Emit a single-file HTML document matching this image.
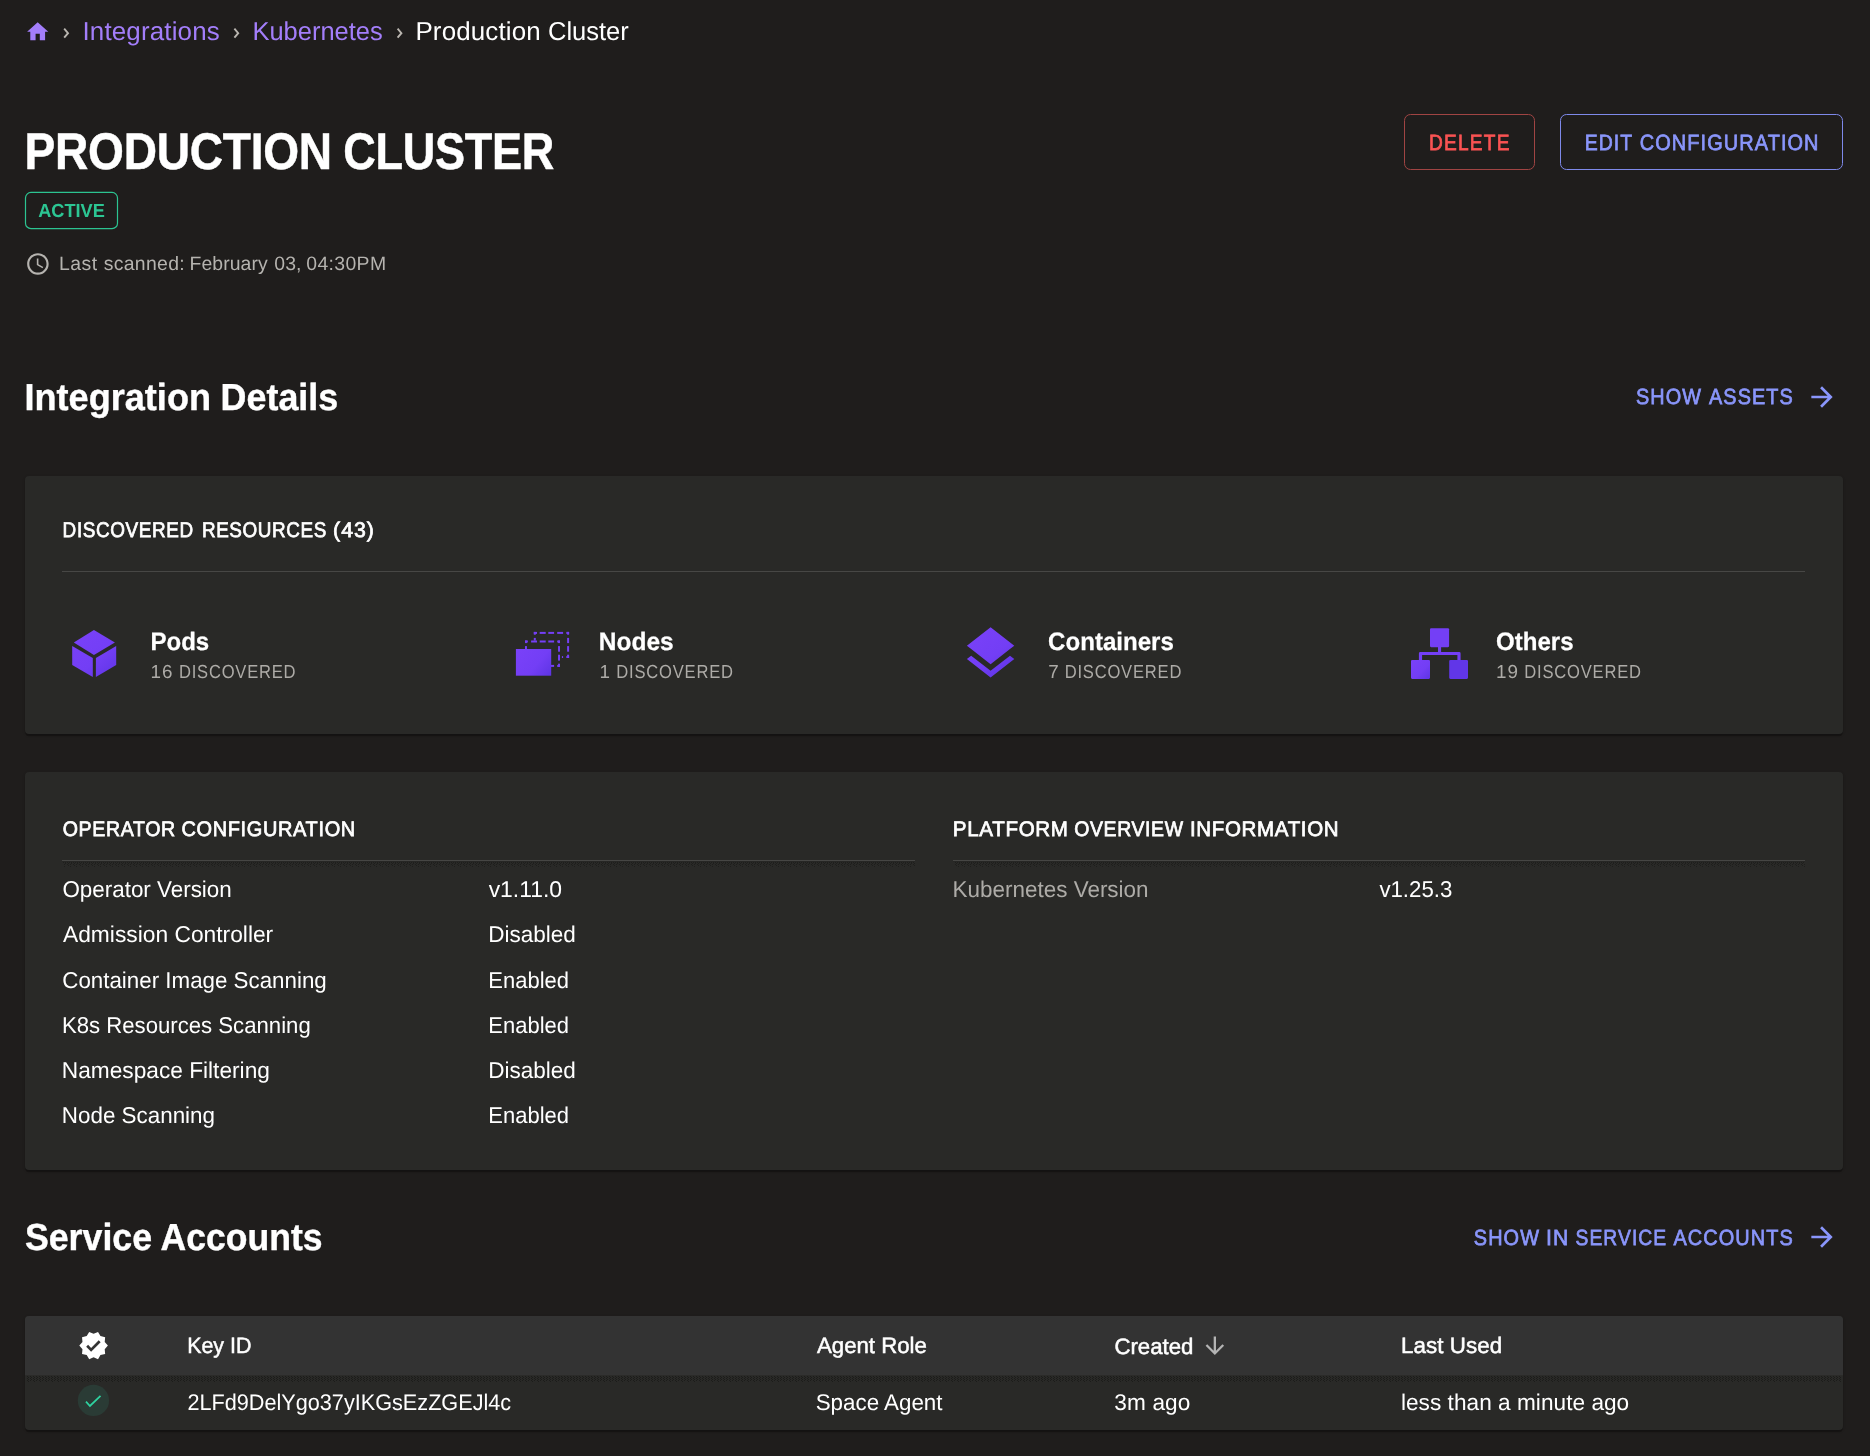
<!DOCTYPE html>
<html><head><meta charset="utf-8"><title>Production Cluster</title>
<style>
html,body{margin:0;padding:0;background:#1f1d1c;}
body{width:1870px;height:1456px;position:relative;overflow:hidden;font-family:"Liberation Sans",sans-serif;}
.a{position:absolute;box-sizing:content-box;}
.card{background:#292927;border-radius:4px;box-shadow:0 2.6px 0.5px -0.4px rgba(0,0,0,.25),0 1px 3px 0 rgba(0,0,0,.22);}
.t{position:absolute;white-space:nowrap;line-height:1;transform-origin:0 50%;font-weight:400;text-rendering:geometricPrecision;}
svg{display:block;overflow:visible}
</style></head><body>
<svg class="a" style="left:24.85px;top:18.65px" width="25.4" height="25.4" viewBox="0 0 24 24" fill="#a37efa"><path d="M10 20v-6h4v6h5v-8h3L12 3 2 12h3v8z"/></svg>
<svg class="a" style="left:0;top:0" width="700" height="60"><polyline points="64.2,28.700000000000003 68.0,33.150000000000006 64.2,37.6" fill="none" stroke="#bab6b0" stroke-width="1.9"/></svg>
<svg class="a" style="left:0;top:0" width="700" height="60"><polyline points="234.4,28.700000000000003 238.2,33.150000000000006 234.4,37.6" fill="none" stroke="#bab6b0" stroke-width="1.9"/></svg>
<svg class="a" style="left:0;top:0" width="700" height="60"><polyline points="397.6,28.700000000000003 401.40000000000003,33.150000000000006 397.6,37.6" fill="none" stroke="#bab6b0" stroke-width="1.9"/></svg>
<svg class="a" style="left:20px;top:188px" width="104" height="46" viewBox="20 188 104 46"><rect x="25.5" y="192.45" width="92" height="36.2" rx="5.5" fill="none" stroke="#2cc491" stroke-width="1.2"/></svg>
<svg class="a" style="left:24.8px;top:251.2px" width="25.8" height="25.8" viewBox="0 0 24 24" fill="#b5b3af"><path d="M11.99 2C6.47 2 2 6.48 2 12s4.47 10 9.99 10C17.52 22 22 17.52 22 12S17.52 2 11.99 2zM12 20c-4.42 0-8-3.58-8-8s3.58-8 8-8 8 3.58 8 8-3.58 8-8 8zm.5-13H11v6l5.25 3.15.75-1.23-4.5-2.67z"/></svg>
<div class="a" style="left:1404px;top:114px;width:129px;height:54px;border:1px solid #a04443;border-radius:6.5px"></div>
<div class="a" style="left:1560px;top:114px;width:281px;height:54px;border:1px solid #7e89ea;border-radius:6.5px"></div>
<svg class="a" style="left:1805.5px;top:381.3px" width="32" height="32" viewBox="0 0 24 24" fill="#8a96fb"><path d="M12 4l-1.41 1.41L16.17 11H4v2h12.17l-5.58 5.59L12 20l8-8z"/></svg>
<svg class="a" style="left:1805.7px;top:1221.2px" width="32" height="32" viewBox="0 0 24 24" fill="#8a96fb"><path d="M12 4l-1.41 1.41L16.17 11H4v2h12.17l-5.58 5.59L12 20l8-8z"/></svg>
<div class="a card" style="left:25px;top:476px;width:1818px;height:258px"></div>
<div class="a card" style="left:25px;top:772px;width:1818px;height:398px"></div>
<div class="a" style="left:62px;top:571px;width:1743px;height:1px;background:#474745"></div>
<div class="a" style="left:62px;top:860px;width:853px;height:1px;background:#464644"></div>
<div class="a" style="left:953px;top:860px;width:852px;height:1px;background:#464644"></div>
<svg class="a" style="left:0;top:861px" width="1870" height="6" viewBox="0 861 1870 6" shape-rendering="crispEdges"><defs><pattern id="h1" patternUnits="userSpaceOnUse" x="0" y="862" width="2" height="1"><rect x="1" y="0" width="1" height="1" fill="#1e1e1c"/></pattern><pattern id="h2" patternUnits="userSpaceOnUse" x="0" y="863" width="3" height="1"><rect x="2" y="0" width="1" height="1" fill="#1e1e1c"/></pattern><pattern id="h3" patternUnits="userSpaceOnUse" x="0" y="864" width="3" height="1"><rect x="1" y="0" width="1" height="1" fill="#1e1e1c"/></pattern><pattern id="h4" patternUnits="userSpaceOnUse" x="0" y="865" width="6" height="1"><rect x="2" y="0" width="1" height="1" fill="#1e1e1c"/></pattern><pattern id="h5" patternUnits="userSpaceOnUse" x="0" y="866" width="6" height="1"><rect x="4" y="0" width="1" height="1" fill="#1e1e1c"/></pattern></defs><rect x="62" y="861" width="853" height="1" fill="#262624"/><rect x="63" y="862" width="852" height="1" fill="url(#h1)"/><rect x="63" y="863" width="852" height="1" fill="url(#h2)"/><rect x="63" y="864" width="852" height="1" fill="url(#h3)"/><rect x="63" y="865" width="852" height="1" fill="url(#h4)"/><rect x="63" y="866" width="852" height="1" fill="url(#h5)"/><rect x="953" y="861" width="852" height="1" fill="#262624"/><rect x="954" y="862" width="851" height="1" fill="url(#h1)"/><rect x="954" y="863" width="851" height="1" fill="url(#h2)"/><rect x="954" y="864" width="851" height="1" fill="url(#h3)"/><rect x="954" y="865" width="851" height="1" fill="url(#h4)"/><rect x="954" y="866" width="851" height="1" fill="url(#h5)"/></svg>
<svg class="a" style="left:62px;top:620px" width="66" height="66" viewBox="62 620 66 66"><defs><linearGradient id="g1" gradientUnits="userSpaceOnUse" x1="76" y1="632" x2="116" y2="680"><stop offset="0" stop-color="#7941f8"/><stop offset="0.55" stop-color="#733ef5"/><stop offset="1" stop-color="#5d34e4"/></linearGradient></defs>
<g fill="url(#g1)">
<polygon points="93.96,629.9 114.9,642.4 93.96,655.1 73.8,642.4"/>
<polygon points="72.2,646.0 92.8,657.9 92.8,677.0 72.2,664.9"/>
<polygon points="95.9,657.9 116.2,646.0 116.2,664.9 95.9,677.0"/>
</g></svg>
<svg class="a" style="left:508px;top:620px" width="66" height="66" viewBox="508 620 66 66"><defs><linearGradient id="g2" gradientUnits="userSpaceOnUse" x1="520" y1="650" x2="551" y2="676"><stop offset="0" stop-color="#7941f8"/><stop offset="0.55" stop-color="#733ef5"/><stop offset="1" stop-color="#5d34e4"/></linearGradient></defs>
<rect x="533.8" y="631.9" width="3.20" height="2.00" fill="#743ff6"/><rect x="539.7" y="631.9" width="6.00" height="2.00" fill="#743ff6"/><rect x="548.3" y="631.9" width="5.80" height="2.00" fill="#743ff6"/><rect x="557.2" y="631.9" width="5.90" height="2.00" fill="#743ff6"/><rect x="566.3" y="631.9" width="2.80" height="2.00" fill="#743ff6"/><rect x="567.1" y="631.9" width="2.00" height="2.80" fill="#743ff6"/><rect x="567.1" y="637.9" width="2.00" height="5.20" fill="#743ff6"/><rect x="567.1" y="646.1" width="2.00" height="5.60" fill="#743ff6"/><rect x="567.1" y="654.7" width="2.00" height="3.30" fill="#743ff6"/><rect x="561.9" y="656.1" width="1.20" height="1.90" fill="#743ff6"/><rect x="566.3" y="656.1" width="2.80" height="1.90" fill="#743ff6"/><rect x="533.8" y="631.9" width="2.00" height="2.80" fill="#743ff6"/><rect x="533.8" y="637.9" width="2.00" height="2.70" fill="#743ff6"/><rect x="525.0" y="640.5" width="2.90" height="2.00" fill="#743ff6"/><rect x="531.1" y="640.5" width="5.90" height="2.00" fill="#743ff6"/><rect x="539.7" y="640.5" width="6.00" height="2.00" fill="#743ff6"/><rect x="548.3" y="640.5" width="5.80" height="2.00" fill="#743ff6"/><rect x="557.2" y="640.5" width="2.80" height="2.00" fill="#743ff6"/><rect x="558.05" y="640.5" width="1.95" height="2.60" fill="#743ff6"/><rect x="558.05" y="646.1" width="1.95" height="5.60" fill="#743ff6"/><rect x="558.05" y="654.7" width="1.95" height="5.90" fill="#743ff6"/><rect x="558.05" y="663.7" width="1.95" height="3.20" fill="#743ff6"/><rect x="551.0" y="664.9" width="3.10" height="2.00" fill="#743ff6"/><rect x="557.2" y="664.9" width="2.80" height="2.00" fill="#743ff6"/><rect x="525.0" y="640.5" width="1.95" height="2.60" fill="#743ff6"/><rect x="525.0" y="646.1" width="1.95" height="3.10" fill="#743ff6"/>
<rect x="515.9" y="649" width="35.3" height="26.7" fill="url(#g2)"/>
</svg>
<svg class="a" style="left:958.9px;top:621.9px" width="63.2" height="63.2" viewBox="0 0 24 24"><defs><linearGradient id="g3" gradientUnits="userSpaceOnUse" x1="5" y1="3" x2="19" y2="21"><stop offset="0" stop-color="#7941f8"/><stop offset="0.55" stop-color="#733ef5"/><stop offset="1" stop-color="#5d34e4"/></linearGradient></defs><path d="M11.99 18.54l-7.37-5.73L3 14.07l9 7 9-7-1.63-1.27-7.38 5.74zM12 16l7.36-5.73L21 9l-9-7-9 7 1.63 1.27L12 16z" fill="url(#g3)"/></svg>
<svg class="a" style="left:1406px;top:620px" width="66" height="66" viewBox="1406 620 66 66"><defs><linearGradient id="g4" gradientUnits="userSpaceOnUse" x1="1412" y1="661" x2="1430" y2="679"><stop offset="0" stop-color="#7941f8"/><stop offset="0.55" stop-color="#733ef5"/><stop offset="1" stop-color="#5d34e4"/></linearGradient></defs>
<g fill="#743ff6">
<rect x="1430" y="628.2" width="19.1" height="19" rx="1.15"/>
<rect x="1438" y="646" width="3.1" height="7"/>
<path d="M1418.9,660.5 V653.4 Q1418.9,652 1420.3,652 H1459.2 Q1460.6,652 1460.6,653.4 V660.5 H1457.4 V655.1 H1422.1 V660.5 Z"/>
</g>
<rect x="1411" y="659.9" width="19" height="19" rx="1.15" fill="url(#g4)"/>
<rect x="1449.2" y="659.9" width="18.8" height="19" rx="1.15" fill="#6136e8"/>
</svg>
<div class="a card" style="left:25px;top:1316px;width:1818px;height:114px;background:#292927;overflow:hidden">
<div style="height:59px;background:#333333"></div></div>
<svg class="a" style="left:25px;top:1375px" width="1818" height="8" viewBox="25 1375 1818 8" shape-rendering="crispEdges">
<defs><pattern id="d1" patternUnits="userSpaceOnUse" x="0" y="1376" width="3" height="2"><rect x="0" y="0" width="1" height="1" fill="#1c1c1a"/><rect x="1" y="1" width="1" height="1" fill="#1c1c1a"/></pattern>
<pattern id="d2" patternUnits="userSpaceOnUse" x="0" y="1381" width="6" height="1"><rect x="4" y="0" width="1" height="1" fill="#1c1c1a"/></pattern></defs>
<rect x="25" y="1375" width="1818" height="1" fill="#2b2b29"/>
<rect x="26" y="1376" width="1816" height="5" fill="url(#d1)"/>
<rect x="26" y="1381" width="1816" height="1" fill="url(#d2)"/>
</svg>
<svg class="a" style="left:77.85px;top:1330.35px" width="31.2" height="31.2" viewBox="0 0 24 24" fill="#ffffff"><path d="M23 12l-2.44-2.79.34-3.69-3.61-.82-1.89-3.2L12 2.96 8.6 1.5 6.71 4.69 3.1 5.5l.34 3.7L1 12l2.44 2.79-.34 3.7 3.61.82L8.6 22.5l3.4-1.47 3.4 1.46 1.89-3.19 3.61-.82-.34-3.69L23 12zm-12.91 4.72l-3.8-3.81 1.48-1.48 2.32 2.33 5.85-5.87 1.48 1.48-7.33 7.35z"/></svg>
<svg class="a" style="left:1200.5px;top:1332.1px" width="27.7" height="27.7" viewBox="0 0 24 24" fill="#b4b4b4"><path d="M20 12l-1.41-1.41L13 16.17V4h-2v12.17l-5.58-5.59L4 12l8 8 8-8z"/></svg>
<svg class="a" style="left:70px;top:1380px" width="48" height="42" viewBox="70 1380 48 42">
<circle cx="93.45" cy="1400.45" r="15.65" fill="#2a3b35"/>
<polyline points="86.0,1401.7 89.95,1406.0 100.5,1395.9" fill="none" stroke="#2ed3a0" stroke-width="1.75"/></svg>
<div id="tx" style="position:absolute;left:0;top:0;width:1870px;height:1456px;will-change:transform">
<span class="t" style="top:20px;font-size:25.94px;color:#a37efa;left:82px;letter-spacing:0.156px;transform:translateX(0.46px);">Integrations</span>
<span class="t" style="top:20px;font-size:25.94px;color:#a37efa;left:252px;transform:translateX(0.43px) scaleX(0.9826);">Kubernetes</span>
<span class="t" style="top:20px;font-size:25.94px;color:#ffffff;left:415px;letter-spacing:0.145px;transform:translateX(0.40px);">Production</span>
<span class="t" style="top:20px;font-size:25.94px;color:#ffffff;left:548px;transform:translateX(0.01px) scaleX(0.9834);">Cluster</span>
<span class="t" style="top:126px;font-size:51.45px;color:#ffffff;font-weight:700;-webkit-text-stroke:0.5px currentColor;letter-spacing:-0.3px;left:24px;transform:translateX(0.58px) scaleX(0.8965);">PRODUCTION</span>
<span class="t" style="top:126px;font-size:51.45px;color:#ffffff;font-weight:700;-webkit-text-stroke:0.5px currentColor;letter-spacing:-0.3px;left:343px;transform:translateX(0.19px) scaleX(0.8761);">CLUSTER</span>
<span class="t" style="top:202px;font-size:18.99px;color:#2cc693;font-weight:700;left:38px;transform:translateX(0.24px) scaleX(0.9569);">ACTIVE</span>
<span class="t" style="top:255px;font-size:19.42px;color:#b5b3af;left:59px;letter-spacing:0.423px;transform:translateX(0.07px);">Last</span>
<span class="t" style="top:255px;font-size:19.42px;color:#b5b3af;left:103px;letter-spacing:0.323px;transform:translateX(0.64px);">scanned:</span>
<span class="t" style="top:255px;font-size:19.42px;color:#b5b3af;left:189px;letter-spacing:0.084px;transform:translateX(0.47px);">February</span>
<span class="t" style="top:255px;font-size:19.42px;color:#b5b3af;left:274px;letter-spacing:0.075px;transform:translateX(0.26px);">03,</span>
<span class="t" style="top:255px;font-size:19.42px;color:#b5b3af;left:306px;letter-spacing:0.337px;transform:translateX(0.36px);">04:30PM</span>
<span class="t" style="top:132px;font-size:22.1px;color:#f95353;-webkit-text-stroke:0.75px currentColor;letter-spacing:1.4px;left:1428px;transform:translateX(0.98px) scaleX(0.8662);">DELETE</span>
<span class="t" style="top:132px;font-size:22.1px;color:#8a96fb;-webkit-text-stroke:0.75px currentColor;letter-spacing:1.2px;left:1584px;transform:translateX(0.66px) scaleX(0.8798);">EDIT</span>
<span class="t" style="top:132px;font-size:22.1px;color:#8a96fb;-webkit-text-stroke:0.75px currentColor;letter-spacing:1.2px;left:1639px;transform:translateX(0.75px) scaleX(0.9023);">CONFIGURATION</span>
<span class="t" style="top:379px;font-size:37.68px;color:#ffffff;font-weight:700;-webkit-text-stroke:0.4px currentColor;left:24px;transform:translateX(0.48px) scaleX(0.9583);">Integration</span>
<span class="t" style="top:379px;font-size:37.68px;color:#ffffff;font-weight:700;-webkit-text-stroke:0.4px currentColor;left:220px;transform:translateX(0.59px) scaleX(0.9521);">Details</span>
<span class="t" style="top:386px;font-size:21.96px;color:#8a96fb;-webkit-text-stroke:0.75px currentColor;letter-spacing:1.2px;left:1635px;transform:translateX(0.95px) scaleX(0.9036);">SHOW</span>
<span class="t" style="top:386px;font-size:21.96px;color:#8a96fb;-webkit-text-stroke:0.75px currentColor;letter-spacing:1.2px;left:1709px;transform:translateX(0.04px) scaleX(0.9036);">ASSETS</span>
<span class="t" style="top:520px;font-size:21.23px;color:#ffffff;-webkit-text-stroke:0.75px currentColor;letter-spacing:0.7px;left:62px;transform:translateX(0.62px) scaleX(0.8908);">DISCOVERED</span>
<span class="t" style="top:520px;font-size:21.23px;color:#ffffff;-webkit-text-stroke:0.75px currentColor;letter-spacing:0.7px;left:201px;transform:translateX(0.93px) scaleX(0.8886);">RESOURCES</span>
<span class="t" style="top:520px;font-size:21.23px;color:#ffffff;-webkit-text-stroke:0.75px currentColor;left:333px;letter-spacing:1.040px;transform:translateX(0.08px);">(43)</span>
<span class="t" style="top:630px;font-size:25.14px;color:#ffffff;font-weight:700;-webkit-text-stroke:0.25px currentColor;left:150px;transform:translateX(0.43px) scaleX(0.9566);">Pods</span>
<span class="t" style="top:663px;font-size:18.84px;color:#adaba7;left:150px;letter-spacing:0.918px;transform:translateX(0.62px);">16</span>
<span class="t" style="top:663px;font-size:18.84px;color:#adaba7;letter-spacing:0.9px;left:178px;transform:translateX(0.89px) scaleX(0.8800);">DISCOVERED</span>
<span class="t" style="top:630px;font-size:25.14px;color:#ffffff;font-weight:700;-webkit-text-stroke:0.25px currentColor;left:598px;transform:translateX(0.81px) scaleX(0.9740);">Nodes</span>
<span class="t" style="top:663px;font-size:18.84px;color:#adaba7;left:599px;letter-spacing:0.900px;transform:translateX(0.52px);">1</span>
<span class="t" style="top:663px;font-size:18.84px;color:#adaba7;letter-spacing:0.9px;left:616px;transform:translateX(0.29px) scaleX(0.8800);">DISCOVERED</span>
<span class="t" style="top:630px;font-size:25.14px;color:#ffffff;font-weight:700;-webkit-text-stroke:0.25px currentColor;left:1048px;transform:translateX(0.10px) scaleX(0.9578);">Containers</span>
<span class="t" style="top:663px;font-size:18.84px;color:#adaba7;left:1048px;letter-spacing:0.900px;transform:translateX(0.35px);">7</span>
<span class="t" style="top:663px;font-size:18.84px;color:#adaba7;letter-spacing:0.9px;left:1064px;transform:translateX(0.69px) scaleX(0.8800);">DISCOVERED</span>
<span class="t" style="top:630px;font-size:25.14px;color:#ffffff;font-weight:700;-webkit-text-stroke:0.25px currentColor;left:1496px;transform:translateX(0.10px) scaleX(0.9559);">Others</span>
<span class="t" style="top:663px;font-size:18.84px;color:#adaba7;left:1496px;letter-spacing:0.900px;transform:translateX(0.02px);">19</span>
<span class="t" style="top:663px;font-size:18.84px;color:#adaba7;letter-spacing:0.9px;left:1524px;transform:translateX(0.29px) scaleX(0.8800);">DISCOVERED</span>
<span class="t" style="top:819px;font-size:21.09px;color:#ffffff;-webkit-text-stroke:0.75px currentColor;letter-spacing:0.7px;left:62px;transform:translateX(0.73px) scaleX(0.9280);">OPERATOR</span>
<span class="t" style="top:819px;font-size:21.09px;color:#ffffff;-webkit-text-stroke:0.75px currentColor;letter-spacing:0.7px;left:181px;transform:translateX(0.44px) scaleX(0.9464);">CONFIGURATION</span>
<span class="t" style="top:819px;font-size:21.09px;color:#ffffff;-webkit-text-stroke:0.75px currentColor;letter-spacing:0.7px;left:952px;transform:translateX(0.82px) scaleX(0.9746);">PLATFORM</span>
<span class="t" style="top:819px;font-size:21.09px;color:#ffffff;-webkit-text-stroke:0.75px currentColor;letter-spacing:0.7px;left:1074px;transform:translateX(0.23px) scaleX(0.9211);">OVERVIEW</span>
<span class="t" style="top:819px;font-size:21.09px;color:#ffffff;-webkit-text-stroke:0.75px currentColor;letter-spacing:0.7px;left:1189px;transform:translateX(0.88px) scaleX(0.9726);">INFORMATION</span>
<span class="t" style="top:878px;font-size:22.9px;color:#ffffff;left:62px;transform:translateX(0.42px) scaleX(0.9786);">Operator Version</span>
<span class="t" style="top:878px;font-size:22.9px;color:#ffffff;left:488px;transform:translateX(0.68px) scaleX(0.9987);">v1.11.0</span>
<span class="t" style="top:923px;font-size:22.9px;color:#ffffff;left:62px;transform:translateX(0.99px) scaleX(0.9954);">Admission Controller</span>
<span class="t" style="top:923px;font-size:22.9px;color:#ffffff;left:488px;transform:translateX(0.15px) scaleX(0.9831);">Disabled</span>
<span class="t" style="top:969px;font-size:22.9px;color:#ffffff;left:62px;transform:translateX(0.26px) scaleX(0.9759);">Container Image Scanning</span>
<span class="t" style="top:969px;font-size:22.9px;color:#ffffff;left:488px;transform:translateX(0.35px) scaleX(0.9603);">Enabled</span>
<span class="t" style="top:1014px;font-size:22.9px;color:#ffffff;left:61px;transform:translateX(0.88px) scaleX(0.9682);">K8s Resources Scanning</span>
<span class="t" style="top:1014px;font-size:22.9px;color:#ffffff;left:488px;transform:translateX(0.35px) scaleX(0.9603);">Enabled</span>
<span class="t" style="top:1059px;font-size:22.9px;color:#ffffff;left:61px;transform:translateX(0.84px) scaleX(0.9910);">Namespace Filtering</span>
<span class="t" style="top:1059px;font-size:22.9px;color:#ffffff;left:488px;transform:translateX(0.15px) scaleX(0.9831);">Disabled</span>
<span class="t" style="top:1104px;font-size:22.9px;color:#ffffff;left:61px;transform:translateX(0.86px) scaleX(0.9783);">Node Scanning</span>
<span class="t" style="top:1104px;font-size:22.9px;color:#ffffff;left:488px;transform:translateX(0.35px) scaleX(0.9603);">Enabled</span>
<span class="t" style="top:878px;font-size:22.9px;color:#adaba7;left:952px;transform:translateX(0.61px) scaleX(0.9807);">Kubernetes Version</span>
<span class="t" style="top:878px;font-size:22.9px;color:#ffffff;left:1379px;transform:translateX(0.38px) scaleX(0.9715);">v1.25.3</span>
<span class="t" style="top:1219px;font-size:37.68px;color:#ffffff;font-weight:700;-webkit-text-stroke:0.4px currentColor;left:24px;transform:translateX(0.93px) scaleX(0.9482);">Service</span>
<span class="t" style="top:1219px;font-size:37.68px;color:#ffffff;font-weight:700;-webkit-text-stroke:0.4px currentColor;left:160px;transform:translateX(0.57px) scaleX(0.9437);">Accounts</span>
<span class="t" style="top:1227px;font-size:21.96px;color:#8a96fb;-webkit-text-stroke:0.75px currentColor;letter-spacing:1.2px;left:1473px;transform:translateX(0.85px) scaleX(0.9050);">SHOW</span>
<span class="t" style="top:1227px;font-size:21.96px;color:#8a96fb;-webkit-text-stroke:0.75px currentColor;letter-spacing:1.2px;left:1546px;transform:translateX(0.07px) scaleX(0.9635);">IN</span>
<span class="t" style="top:1227px;font-size:21.96px;color:#8a96fb;-webkit-text-stroke:0.75px currentColor;letter-spacing:1.2px;left:1575px;transform:translateX(0.57px) scaleX(0.8774);">SERVICE</span>
<span class="t" style="top:1227px;font-size:21.96px;color:#8a96fb;-webkit-text-stroke:0.75px currentColor;letter-spacing:1.2px;left:1673px;transform:translateX(0.44px) scaleX(0.9063);">ACCOUNTS</span>
<span class="t" style="top:1335px;font-size:22.32px;color:#ffffff;-webkit-text-stroke:0.5px currentColor;left:187px;transform:translateX(0.16px) scaleX(0.9581);">Key ID</span>
<span class="t" style="top:1335px;font-size:22.32px;color:#ffffff;-webkit-text-stroke:0.5px currentColor;left:817px;transform:translateX(0.01px) scaleX(0.9953);">Agent Role</span>
<span class="t" style="top:1336px;font-size:22.32px;color:#ffffff;-webkit-text-stroke:0.5px currentColor;left:1114px;transform:translateX(0.42px) scaleX(0.9955);">Created</span>
<span class="t" style="top:1335px;font-size:22.32px;color:#ffffff;-webkit-text-stroke:0.5px currentColor;left:1401px;letter-spacing:0.097px;transform:translateX(0.00px);">Last Used</span>
<span class="t" style="top:1392px;font-size:22.61px;color:#ffffff;left:187px;transform:translateX(0.43px) scaleX(0.9576);">2LFd9DelYgo37yIKGsEzZGEJl4c</span>
<span class="t" style="top:1392px;font-size:22.61px;color:#ffffff;left:815px;transform:translateX(0.66px) scaleX(0.9890);">Space Agent</span>
<span class="t" style="top:1392px;font-size:22.61px;color:#ffffff;left:1114px;letter-spacing:0.116px;transform:translateX(0.34px);">3m ago</span>
<span class="t" style="top:1392px;font-size:22.61px;color:#ffffff;left:1400px;letter-spacing:0.036px;transform:translateX(0.93px);">less than a minute ago</span>
</div>
</body></html>
